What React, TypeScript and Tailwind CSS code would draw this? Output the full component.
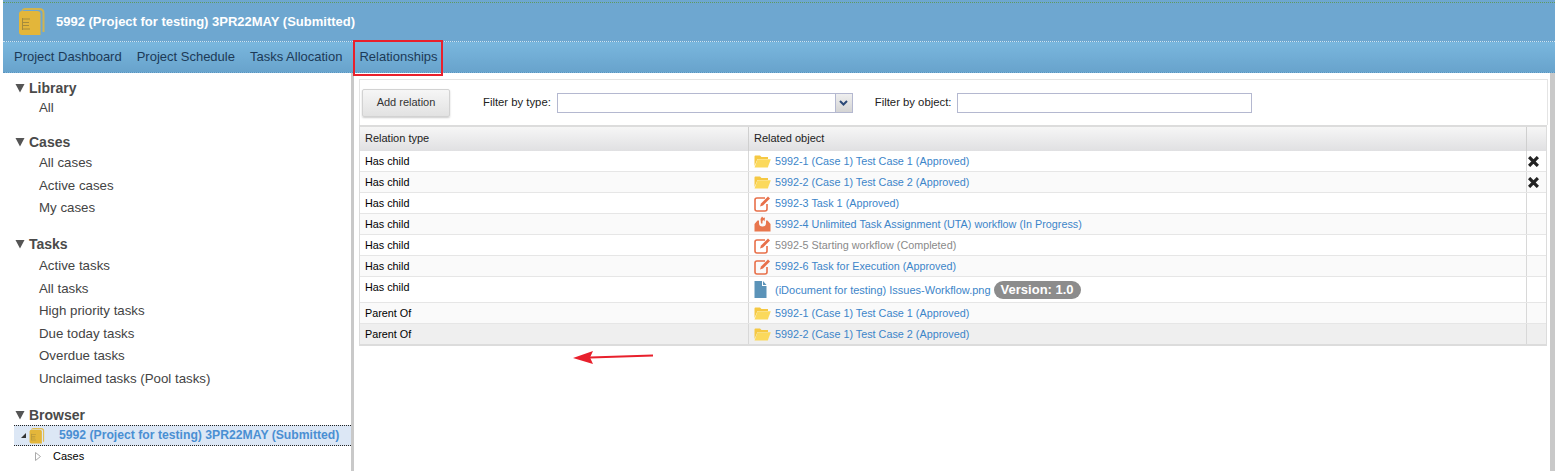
import React from "react";

const FONT = "font-['Liberation_Sans',Arial,sans-serif]";

function ProjectIcon({ size = 28 }: { size?: number }) {
  return (
    <svg width={size} height={size} viewBox="0 0 26 28" className="shrink-0">
      <path d="M2.5 3 Q3 0 6.5 0 H20 Q25.5 0 25.5 5 V24 H23.5 V5 Q23.5 2 20 2 H5Z" fill="#e3b63a" opacity="0.85" />
      <path d="M0 6 Q0 3 3 3 H18 Q21.5 3 21.5 6 V27 H3 Q0 27 0 24Z" fill="#e3b63a" />
      <path d="M3 10 H4 V22 H3Z M4 10.5 H11 V11.5 H4Z M4 14 H10 V15 H4Z M4 17 H10 V18 H4Z M4 20.5 H11 V21.5 H4Z" fill="#a58b3b" />
    </svg>
  );
}

function FolderIcon() {
  return (
    <svg width="17" height="13" viewBox="0 0 17 13" className="shrink-0">
      <path d="M0.5 1.5 Q0.5 0.5 1.5 0.5 H6 L7.5 2 H14 V4 H3.5 L0.5 11 Z" fill="#f5c842" />
      <path d="M3.5 4.2 H16.8 L13.8 12.5 H0.5 Z" fill="#fbd95c" />
    </svg>
  );
}

function TaskIcon() {
  return (
    <svg width="17" height="17" viewBox="0 0 17 17" className="shrink-0" fill="none">
      <path d="M11 3 H3 Q1 3 1 5 V14 Q1 16 3 16 H11 Q13 16 13 14 V9" stroke="#e8704a" strokeWidth="1.6" />
      <path d="M6 11.5 L7 8.5 L14 1.5 L16 3.5 L9 10.5 Z" fill="#e8704a" />
    </svg>
  );
}

function WorkflowIcon() {
  return (
    <svg width="17" height="16" viewBox="0 0 17 16" className="shrink-0">
      <path d="M0.5 8 L3.5 4.5 H5 V7 Q5 10.5 8.5 10.5 Q12 10.5 12 7 V4.5 H13.5 L16.5 8 V15.5 H0.5 Z" fill="#e8764d" />
      <path d="M6.5 3 L8 0.5 L9.5 2 L11 1.5 L10.5 5.5 L9.5 4 L8.5 5 V7.5 H7 Z" fill="#e8764d" />
    </svg>
  );
}

function DocIcon() {
  return (
    <svg width="13" height="17" viewBox="0 0 13 17" className="shrink-0">
      <path d="M0.5 0 H8 V5 H12.5 V17 H0.5 Z" fill="#5b93b8" />
      <path d="M9 0 L12.5 4 H9 Z" fill="#5b93b8" />
    </svg>
  );
}

function CloseIcon() {
  return (
    <svg width="11" height="11" viewBox="0 0 11 11">
      <path d="M2.2 2.2 L8.8 8.8 M8.8 2.2 L2.2 8.8" stroke="#222" strokeWidth="3.2" strokeLinecap="square" />
    </svg>
  );
}

const Caret = () => (
  <svg width="10" height="10" viewBox="0 0 10 10" className="shrink-0">
    <path d="M0.5 1 H9.5 L5 9.5 Z" fill="#555" />
  </svg>
);

function Section({ title, items, className, listClass }: { title: string; items: string[]; className: string; listClass: string }) {
  return (
    <div className={className}>
      <div className="flex items-center gap-[4px] pl-[15px] h-[16px] text-[14px] font-bold text-[#4a4a4a]">
        <Caret />
        <span>{title}</span>
      </div>
      <ul className={`pl-[39px] text-[13.3px] text-[#444] ${listClass}`}>
        {items.map((t) => (
          <li key={t} className="h-[22.6px] leading-[22px]">{t}</li>
        ))}
      </ul>
    </div>
  );
}

type Row = { type: string; icon: React.ReactNode; text: string; grey?: boolean; del?: boolean; version?: boolean; bg: string; h: string };

const rows: Row[] = [
  { type: "Has child", icon: <FolderIcon />, text: "5992-1 (Case 1) Test Case 1 (Approved)", del: true, bg: "bg-white", h: "h-[21px]" },
  { type: "Has child", icon: <FolderIcon />, text: "5992-2 (Case 1) Test Case 2 (Approved)", del: true, bg: "bg-[#fafafa]", h: "h-[21px]" },
  { type: "Has child", icon: <TaskIcon />, text: "5992-3 Task 1 (Approved)", bg: "bg-white", h: "h-[21px]" },
  { type: "Has child", icon: <WorkflowIcon />, text: "5992-4 Unlimited Task Assignment (UTA) workflow (In Progress)", bg: "bg-[#fafafa]", h: "h-[21px]" },
  { type: "Has child", icon: <TaskIcon />, text: "5992-5 Starting workflow (Completed)", grey: true, bg: "bg-white", h: "h-[21px]" },
  { type: "Has child", icon: <TaskIcon />, text: "5992-6 Task for Execution (Approved)", bg: "bg-[#fafafa]", h: "h-[21px]" },
  { type: "Has child", icon: <DocIcon />, text: "(iDocument for testing) Issues-Workflow.png", version: true, bg: "bg-white", h: "h-[26px]" },
  { type: "Parent Of", icon: <FolderIcon />, text: "5992-1 (Case 1) Test Case 1 (Approved)", bg: "bg-[#fafafa]", h: "h-[21px]" },
  { type: "Parent Of", icon: <FolderIcon />, text: "5992-2 (Case 1) Test Case 2 (Approved)", bg: "bg-[#efefef]", h: "h-[20px]" },
];

export default function App() {
  return (
    <div className={`${FONT} relative w-[1555px] h-[471px] overflow-hidden bg-white`}>
      {/* Title bar */}
      <div className="ml-[3px] h-[41px] pt-[2px] bg-[#6ea7d0]">
        <div className="h-px border-t border-dotted border-[#5f9a5f]" />
        <div className="flex items-center h-[37px] pl-[15px] gap-[10px]">
          <ProjectIcon />
          <span className="text-[13px] font-bold text-white">5992 (Project for testing) 3PR22MAY (Submitted)</span>
        </div>
      </div>
      {/* Nav */}
      <nav className="ml-[3px] h-[32px] flex items-center pl-[11px] gap-[15px] border-t border-b border-dotted border-t-[#cfe4f2] border-b-[#5b93bd] bg-gradient-to-b from-[#7ab7de] to-[#68a3cc] text-[13px] text-[#1c3a57]">
        <span>Project Dashboard</span>
        <span>Project Schedule</span>
        <span>Tasks Allocation</span>
        <span className="relative self-start -mt-[2px] -ml-[4px] pl-[4px] pr-[3px] h-[36px] leading-[30px] border-2 border-[#e8202c]">Relationships</span>
      </nav>

      <div className="flex h-[398px]">
        {/* Sidebar */}
        <aside className="w-[351px] shrink-0 pt-[7px] overflow-hidden">
          <Section className="h-[54px]" listClass="pt-[1px]" title="Library" items={["All"]} />
          <Section className="h-[102px]" listClass="pt-[2px]" title="Cases" items={["All cases", "Active cases", "My cases"]} />
          <Section className="h-[171px]" listClass="pt-[3px]" title="Tasks" items={["Active tasks", "All tasks", "High priority tasks", "Due today tasks", "Overdue tasks", "Unclaimed tasks (Pool tasks)"]} />
          <div>
            <div className="flex items-center gap-[4px] pl-[15px] h-[16px] text-[14px] font-bold text-[#4a4a4a]">
              <Caret />
              <span>Browser</span>
            </div>
            <div className="ml-[14px] mt-[2px] h-[21px] flex items-center border-y border-dotted border-[#222] bg-[#dce7f5]">
              <svg width="7" height="7" viewBox="0 0 7 7" className="ml-[6px] shrink-0"><path d="M6 1 V6 H1 Z" fill="#333" /></svg>
              <span className="ml-[2px] flex"><ProjectIcon size={16} /></span>
              <span className="ml-[14px] text-[12.2px] font-bold text-[#4a8fd3] whitespace-nowrap">5992 (Project for testing) 3PR22MAY (Submitted)</span>
            </div>
            <div className="flex items-center h-[21px] pl-[35px] gap-[12px] text-[11px] text-black">
              <svg width="6" height="9" viewBox="0 0 6 9"><path d="M0.5 0.5 L5.5 4.5 L0.5 8.5 Z" fill="#fff" stroke="#aaa" /></svg>
              <span>Cases</span>
            </div>
          </div>
        </aside>
        <div className="w-[3px] shrink-0 bg-[#c9c9c9]" />

        {/* Main */}
        <main className="w-[1196px] shrink-0 pl-[5px] pr-[3px] pt-[6px]">
          <div className="h-[46px] w-[1189px] flex items-center border-l border-t border-r border-[#e4e4e4] pl-[2px] text-[11.3px] text-[#222]">
            <button className="w-[88px] h-[28px] rounded-[2px] border border-[#d2d2d2] bg-gradient-to-b from-[#f6f6f6] to-[#e2e2e2] shadow-[0_1px_2px_#ccc] text-[11px] text-[#333]">Add relation</button>
            <span className="ml-[33px]">Filter by type:</span>
            <div className="ml-[6px] w-[296px] h-[20px] flex justify-end border border-[#b4b8d0] bg-white">
              <div className="w-[17px] flex items-center justify-center bg-gradient-to-b from-[#efefef] to-[#d4d4d4] border-l border-[#b4b8d0]">
                <svg width="9" height="6" viewBox="0 0 9 6"><path d="M1 1 L4.5 4.5 L8 1" fill="none" stroke="#2c4a78" strokeWidth="2" /></svg>
              </div>
            </div>
            <span className="ml-[22px]">Filter by object:</span>
            <div className="ml-[6px] w-[295px] h-[20px] border border-[#b4b8d0] bg-white" />
          </div>

          <div className="w-[1188px] border-x border-b-2 border-[#dcdcdc] text-[10.8px]">
            <div className="flex h-[26px] border-t-2 border-[#dcdcdc] bg-gradient-to-b from-[#f6f6f6] to-[#e0e0e2] text-[11px] text-[#222]">
              <div className="w-[389px] pl-[5px] leading-[22px] border-r border-[#cfcfcf]">Relation type</div>
              <div className="w-[778px] pl-[5px] leading-[22px] border-r border-[#cfcfcf]">Related object</div>
              <div className="flex-1" />
            </div>
            {rows.map((r, i) => (
              <div key={i} className={`flex ${r.h} ${r.bg} border-b border-[#e6e6e6] last:border-b-0`}>
                <div className="w-[389px] pl-[5px] border-r border-[#d8d8d8] text-black leading-[20px]">{r.type}</div>
                <div className="w-[778px] pl-[5px] flex items-center border-r border-[#d8d8d8]">
                  <span className="w-[21px] flex justify-start shrink-0">{r.icon}</span>
                  <span className={`whitespace-nowrap ${r.version ? "text-[11px] pt-[1px]" : ""} ${r.grey ? "text-[#8a8a8a]" : "text-[#3c85c9]"}`}>{r.text}</span>
                  {r.version && (
                    <span className="ml-[3px] px-[7px] h-[18px] leading-[18px] rounded-full bg-[#8c8c8c] text-white font-bold text-[13px]">Version: 1.0</span>
                  )}
                </div>
                <div className="flex-1 flex items-center pl-[1px]">{r.del && <CloseIcon />}</div>
              </div>
            ))}
          </div>
        </main>
        <div className="w-[5px] shrink-0 bg-[#c9c9c9]" />
      </div>

      {/* Annotation arrow */}
      <svg className="absolute left-[570px] top-[348px]" width="86" height="20" viewBox="0 0 86 20">
        <path d="M83 7.5 L20 9.5" stroke="#e8202c" strokeWidth="2" />
        <path d="M3 10 L23 3 L20 9.5 L23 16 Z" fill="#e8202c" />
      </svg>
    </div>
  );
}
